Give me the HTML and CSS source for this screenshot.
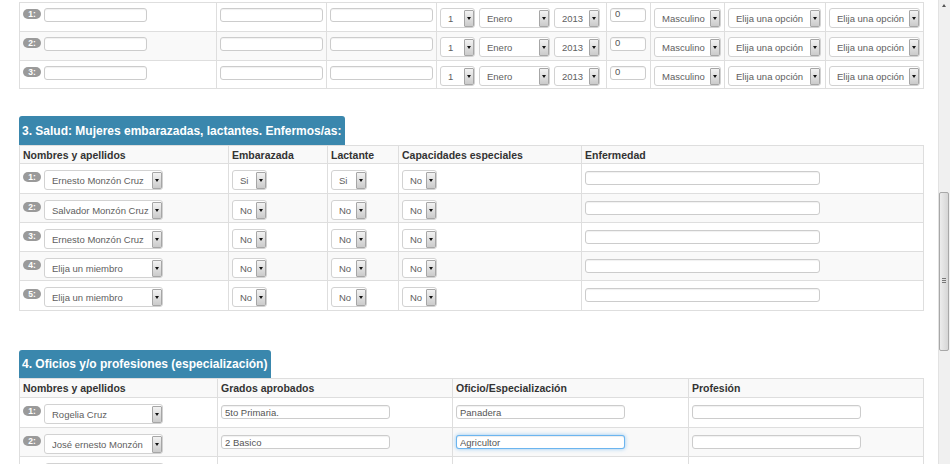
FILE: index.html
```html
<!DOCTYPE html>
<html lang="es">
<head>
<meta charset="utf-8">
<title>Formulario</title>
<link rel="stylesheet" href="styles.css">
</head>
<body>
<div class="page">

  <div class="tbl tbl-a">
    <div class="row">
      <div class="c"><span class="badge">1:</span><input class="inp w103" value=""></div>
      <div class="c"><input class="inp w102" value=""></div>
      <div class="c"><input class="inp w102" value=""></div>
      <div class="c"><div class="sel w35"><span class="sv">1</span><span class="arr"></span></div><div class="sel w71"><span class="sv">Enero</span><span class="arr"></span></div><div class="sel w46"><span class="sv">2013</span><span class="arr"></span></div></div>
      <div class="c"><input class="inp w36 num" value="0"></div>
      <div class="c"><div class="sel w67"><span class="sv">Masculino</span><span class="arr"></span></div></div>
      <div class="c"><div class="sel w93"><span class="sv">Elija una opción</span><span class="arr"></span></div></div>
      <div class="c"><div class="sel w91"><span class="sv">Elija una opción</span><span class="arr"></span></div></div>
    </div>
    <div class="row alt">
      <div class="c"><span class="badge">2:</span><input class="inp w103" value=""></div>
      <div class="c"><input class="inp w102" value=""></div>
      <div class="c"><input class="inp w102" value=""></div>
      <div class="c"><div class="sel w35"><span class="sv">1</span><span class="arr"></span></div><div class="sel w71"><span class="sv">Enero</span><span class="arr"></span></div><div class="sel w46"><span class="sv">2013</span><span class="arr"></span></div></div>
      <div class="c"><input class="inp w36 num" value="0"></div>
      <div class="c"><div class="sel w67"><span class="sv">Masculino</span><span class="arr"></span></div></div>
      <div class="c"><div class="sel w93"><span class="sv">Elija una opción</span><span class="arr"></span></div></div>
      <div class="c"><div class="sel w91"><span class="sv">Elija una opción</span><span class="arr"></span></div></div>
    </div>
    <div class="row last28">
      <div class="c"><span class="badge">3:</span><input class="inp w103" value=""></div>
      <div class="c"><input class="inp w102" value=""></div>
      <div class="c"><input class="inp w102" value=""></div>
      <div class="c"><div class="sel w35"><span class="sv">1</span><span class="arr"></span></div><div class="sel w71"><span class="sv">Enero</span><span class="arr"></span></div><div class="sel w46"><span class="sv">2013</span><span class="arr"></span></div></div>
      <div class="c"><input class="inp w36 num" value="0"></div>
      <div class="c"><div class="sel w67"><span class="sv">Masculino</span><span class="arr"></span></div></div>
      <div class="c"><div class="sel w93"><span class="sv">Elija una opción</span><span class="arr"></span></div></div>
      <div class="c"><div class="sel w91"><span class="sv">Elija una opción</span><span class="arr"></span></div></div>
    </div>
  </div>

  <section class="sec sec3">
    <h3 class="lbl">3. Salud: Mujeres embarazadas, lactantes. Enfermos/as:</h3>
    <div class="tbl tbl-b">
      <div class="row head">
        <div class="c">Nombres y apellidos</div>
        <div class="c">Embarazada</div>
        <div class="c">Lactante</div>
        <div class="c">Capacidades especiales</div>
        <div class="c">Enfermedad</div>
      </div>
      <div class="row tall">
        <div class="c"><span class="badge">1:</span><div class="sel w119"><span class="sv">Ernesto Monzón Cruz</span><span class="arr"></span></div></div>
        <div class="c"><div class="sel w35"><span class="sv">Si</span><span class="arr"></span></div></div>
        <div class="c"><div class="sel w36"><span class="sv">Si</span><span class="arr"></span></div></div>
        <div class="c"><div class="sel w35"><span class="sv">No</span><span class="arr"></span></div></div>
        <div class="c"><input class="inp w235 low" value=""></div>
      </div>
      <div class="row alt">
        <div class="c"><span class="badge">2:</span><div class="sel w119"><span class="sv">Salvador Monzón Cruz</span><span class="arr"></span></div></div>
        <div class="c"><div class="sel w35"><span class="sv">No</span><span class="arr"></span></div></div>
        <div class="c"><div class="sel w36"><span class="sv">No</span><span class="arr"></span></div></div>
        <div class="c"><div class="sel w35"><span class="sv">No</span><span class="arr"></span></div></div>
        <div class="c"><input class="inp w235 low" value=""></div>
      </div>
      <div class="row">
        <div class="c"><span class="badge">3:</span><div class="sel w119"><span class="sv">Ernesto Monzón Cruz</span><span class="arr"></span></div></div>
        <div class="c"><div class="sel w35"><span class="sv">No</span><span class="arr"></span></div></div>
        <div class="c"><div class="sel w36"><span class="sv">No</span><span class="arr"></span></div></div>
        <div class="c"><div class="sel w35"><span class="sv">No</span><span class="arr"></span></div></div>
        <div class="c"><input class="inp w235 low" value=""></div>
      </div>
      <div class="row alt">
        <div class="c"><span class="badge">4:</span><div class="sel w119"><span class="sv">Elija un miembro</span><span class="arr"></span></div></div>
        <div class="c"><div class="sel w35"><span class="sv">No</span><span class="arr"></span></div></div>
        <div class="c"><div class="sel w36"><span class="sv">No</span><span class="arr"></span></div></div>
        <div class="c"><div class="sel w35"><span class="sv">No</span><span class="arr"></span></div></div>
        <div class="c"><input class="inp w235 low" value=""></div>
      </div>
      <div class="row tall">
        <div class="c"><span class="badge">5:</span><div class="sel w119"><span class="sv">Elija un miembro</span><span class="arr"></span></div></div>
        <div class="c"><div class="sel w35"><span class="sv">No</span><span class="arr"></span></div></div>
        <div class="c"><div class="sel w36"><span class="sv">No</span><span class="arr"></span></div></div>
        <div class="c"><div class="sel w35"><span class="sv">No</span><span class="arr"></span></div></div>
        <div class="c"><input class="inp w235 low" value=""></div>
      </div>
    </div>
  </section>

  <section class="sec sec4">
    <h3 class="lbl lbl4">4. Oficios y/o profesiones (especialización)</h3>
    <div class="tbl tbl-c">
      <div class="row head head19">
        <div class="c">Nombres y apellidos</div>
        <div class="c">Grados aprobados</div>
        <div class="c">Oficio/Especialización</div>
        <div class="c">Profesión</div>
      </div>
      <div class="row tall">
        <div class="c"><span class="badge">1:</span><div class="sel w119"><span class="sv">Rogelia Cruz</span><span class="arr"></span></div></div>
        <div class="c"><input class="inp w169 low" value="5to Primaria."></div>
        <div class="c"><input class="inp w169 low" value="Panadera"></div>
        <div class="c"><input class="inp w169 low" value=""></div>
      </div>
      <div class="row alt">
        <div class="c"><span class="badge">2:</span><div class="sel w119"><span class="sv">José ernesto Monzón</span><span class="arr"></span></div></div>
        <div class="c"><input class="inp w169 low" value="2 Basico"></div>
        <div class="c"><input class="inp w169 low focus" value="Agricultor"></div>
        <div class="c"><input class="inp w169 low" value=""></div>
      </div>
      <div class="row">
        <div class="c"><div class="sel w119 sel-off"><span class="sv"></span><span class="arr"></span></div></div>
        <div class="c"><input class="inp w169 low" value=""></div>
        <div class="c"><input class="inp w169 low" value=""></div>
        <div class="c"><input class="inp w169 low" value=""></div>
      </div>
    </div>
  </section>

</div>

<div class="sb" aria-hidden="true">
  <span class="sb-up"></span>
  <span class="sb-thumb"><span class="grip"></span></span>
</div>
</body>
</html>
```

FILE: styles.css
```css
html, body {
  margin: 0;
  height: 100%;
  overflow: hidden;
  background: #fff;
}
body {
  font-family: "Liberation Sans", Arial, sans-serif;
  color: #333;
}
.page {
  padding: 2px 0 0 19px;
  width: 905px;
}

/* tables */
.tbl {
  display: grid;
  width: 905px;
  box-sizing: border-box;
  border-right: 1px solid #dedede;
  border-bottom: 1px solid #dedede;
}
.tbl-a { grid-template-columns: 197px 110px 110px 170px 44px 74px 101px 98px; }
.tbl-b { grid-template-columns: 209px 99px 71px 183px 342px; }
.tbl-c { grid-template-columns: 198px 235px 236px 235px; }

.row { display: contents; }
.c {
  box-sizing: border-box;
  height: 29px;
  border-left: 1px solid #dedede;
  border-top: 1px solid #dedede;
  padding: 5px 0 0 3px;
  display: flex;
  align-items: flex-start;
  gap: 4px;
  background: #fff;
  min-width: 0;
}
.row.tall > .c { height: 30px; }
.row.last28 > .c { height: 28px; }
.alt > .c { background: #f9f9f9; }
.head > .c {
  height: 18px;
  padding: 0 0 0 3px;
  align-items: center;
  font-weight: bold;
  font-size: 10.5px;
  color: #333;
  background: #f9f9f9;
  white-space: nowrap;
}
.head19 > .c { height: 19px; }
.tbl-b .row:not(.head) > .c,
.tbl-c .row:not(.head) > .c { padding-top: 6px; }

/* badges */
.badge {
  flex: none;
  width: 18px;
  height: 10px;
  margin-top: 1px;
  border-radius: 5px;
  background: #9a9a9a;
  color: #fff;
  font-size: 8.5px;
  font-weight: bold;
  line-height: 10px;
  text-align: center;
  margin-right: -1px;
}
.tbl-b .badge, .tbl-c .badge { margin-top: 2px; }

/* inputs */
.inp {
  flex: none;
  box-sizing: border-box;
  height: 14px;
  margin: 0;
  padding: 0 3px;
  border: 1px solid #cccccc;
  border-radius: 3px;
  background: #fff;
  box-shadow: inset 0 1px 1px rgba(0,0,0,0.06);
  font-family: "Liberation Sans", Arial, sans-serif;
  font-size: 9.5px;
  color: #555;
  outline: none;
}
.inp.low { margin-top: 1px; }
.inp.num { padding: 0 0 3px 4px; height: 14px; }
.inp.focus {
  border-color: rgba(82,168,236,0.85);
  box-shadow: inset 0 1px 1px rgba(0,0,0,0.075), 0 0 4px rgba(82,168,236,0.6);
}

/* selects */
.sel {
  flex: none;
  box-sizing: border-box;
  height: 20px;
  display: flex;
  align-items: center;
  padding-left: 7px;
  border: 1px solid #d2d2d2;
  border-radius: 3px;
  background: #fff;
  font-size: 9.5px;
  color: #606060;
  white-space: nowrap;
  overflow: hidden;
}
.sel-off { margin-left: 22px; }
.sv { flex: 1; min-width: 0; overflow: hidden; }
.arr {
  flex: none;
  box-sizing: border-box;
  width: 10px;
  height: 17px;
  border: 1px solid #a6a6a6;
  border-radius: 1px;
  background: linear-gradient(#f2f2f2, #cbcbcb);
  display: flex;
  align-items: center;
  justify-content: center;
}
.arr::after {
  content: "";
  border-left: 2.5px solid transparent;
  border-right: 2.5px solid transparent;
  border-top: 3px solid #111;
}

.w35 { width: 35px; }
.w36 { width: 36px; }
.w46 { width: 46px; }
.w67 { width: 67px; }
.w71 { width: 71px; }
.w91 { width: 91px; }
.w93 { width: 93px; }
.w102 { width: 103px; }
.w103 { width: 103px; }
.w119 { width: 119px; }
.w169 { width: 169px; }
.w235 { width: 235px; }

/* section headings */
.sec3 { margin-top: 27px; }
.sec4 { margin-top: 39px; }
.sec { font-size: 0; }
.sec .tbl { font-size: 10.5px; }
.lbl {
  display: inline-block;
  margin: 0;
  height: 29px;
  box-sizing: border-box;
  padding: 1px 4px 0 3px;
  line-height: 28px;
  font-size: 12px;
  font-weight: bold;
  color: #fff;
  background: #3a87ad;
  border-radius: 3px 3px 0 0;
  vertical-align: top;
}
.lbl4 { height: 28px; line-height: 27px; }

/* scrollbar drawing */
.sb {
  position: fixed;
  top: 0;
  right: 0;
  width: 12px;
  height: 464px;
  box-sizing: border-box;
  background: #f0f0f0;
  border-left: 1px solid #e2e2e2;
}
.sb-up {
  position: absolute;
  top: 4px;
  left: 3px;
  border-left: 2.5px solid transparent;
  border-right: 2.5px solid transparent;
  border-bottom: 3px solid #555;
}
.sb-thumb {
  position: absolute;
  top: 192px;
  left: 0;
  width: 10px;
  height: 159px;
  box-sizing: border-box;
  border: 1px solid #a8a8a8;
  border-radius: 2px;
  background: linear-gradient(to right, #ececec, #d6d6d6);
}
.grip {
  position: absolute;
  top: 85px;
  left: 2px;
  width: 4px;
  height: 5px;
  border-top: 1px solid #777;
  border-bottom: 1px solid #777;
  box-sizing: border-box;
}
.grip::after {
  content: "";
  position: absolute;
  left: 0;
  right: 0;
  top: 1px;
  border-top: 1px solid #777;
}
```
